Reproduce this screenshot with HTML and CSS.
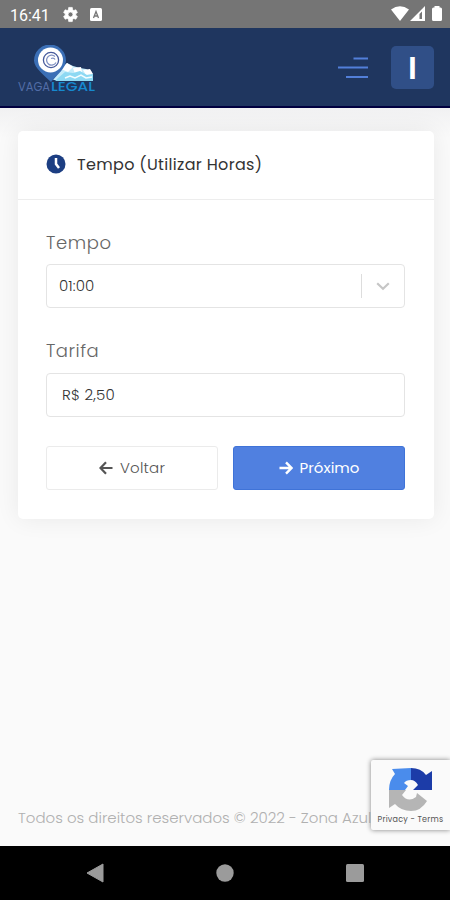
FILE: index.html
```html
<!DOCTYPE html>
<html lang="pt-BR">
<head>
    <meta charset="UTF-8">
    <meta name="viewport" content="width=device-width, initial-scale=1.0">
    <title>Vaga Legal - Tempo</title>
    <link rel="stylesheet" href="styles.css">
</head>
<body>
    <div class="status-bar">
        <span class="clock">16:41</span>
        <svg class="status-gear" width="17" height="17" viewBox="0 0 24 24"><path fill="#fff" stroke="#fff" fill-rule="evenodd" d="M19.4 13c.1-.7.1-1.300 0-2l2.300-1.800-2.200-3.900-2.800 1.100-1.700-1L14.500 2h-5L9 5.400l-1.700 1-2.800-1.100-2.200 3.900L4.600 11v2l-2.300 1.800 2.200 3.900 2.800-1.100 1.700 1 .5 3.400h5l.5-3.400 1.700-1 2.800 1.100 2.200-3.900zM12 15.500a3.500 3.500 0 1 1 0-7 3.500 3.500 0 0 1 0 7z"/></svg>
        <svg class="status-app" width="12" height="13" viewBox="0 0 12 13"><rect width="12" height="13" rx="1.500" fill="#fff"/><path d="M3.500 10 6 3.500 8.500 10M4.500 8h3" fill="none" stroke="#777" stroke-width="1.300"/></svg>
        <svg class="status-signal" width="52" height="18" viewBox="0 0 52 18"><path fill="#fff" d="M0 4.500Q9-2 18 4.500L9 16zM19 16 34 1v15z"/><path d="M28.500 14V9L31 6.500V14z" fill="#757575"/><path fill="#fff" d="M43.500 1h5v1.500h1q1.500 0 1.500 1.500v10.500q0 1.500-1.500 1.500h-7q-1.500 0-1.500-1.500V4q0-1.500 1.500-1.500h1z"/></svg>
    </div>

    <header class="topbar">
        <svg class="logo" width="80" height="52" viewBox="0 0 80 52">
            <path d="M36 35 44 24l6-6 6 3 7 2 6 1 6 3 1 9z" fill="#c5ecfa"/>
            <path d="m44 24 6-6 6 4-5 5zM56 23l8-1 1 5-7 2zM66 25l7-1 3 5-7 1z" fill="#fff"/>
            <path d="m41 33 7-6 8 1 7-2 7 4 6-1v7H38z" fill="#8ed9f3"/>
            <path d="m48 33 5-2 5 2 6-3 5 3 6-1" fill="none" stroke="#f4fdff" stroke-width="1.500"/>
            <path d="M34 37C28 31 17 23 17 15.500a16 16 0 0 1 32 0C49 23 40 30 34 37z" fill="#3b6fb6"/>
            <circle cx="33.500" cy="15" r="12.500" fill="#fff"/>
            <circle cx="34" cy="15" r="7.600" fill="none" stroke="#465a9c" stroke-width="1.300"/>
            <path d="M38 11.500a5 5 0 1 0 1 6M34 13.500q3-1 4 1" fill="none" stroke="#8293c4" stroke-width="1.300"/>
            <text class="logo-vaga" x="1" y="46" textLength="32" lengthAdjust="spacingAndGlyphs">VAGA</text>
            <text class="logo-legal" x="34" y="46" textLength="44" lengthAdjust="spacingAndGlyphs">LEGAL</text>
        </svg>
        <svg class="menu-icon" width="30" height="22" viewBox="0 0 30 22"><path d="M15.500 1.500H30M0 10.500h30M8 20h22" fill="none" stroke="#527fd9" stroke-width="2"/></svg>
        <div class="avatar">I</div>
    </header>

    <main class="page">
        <section class="card">
            <div class="card-header">
                <svg width="20" height="20" viewBox="0 0 20 20"><circle cx="10" cy="10" r="9.500" fill="#1c3e82"/><path d="M10 4v6l3 4" fill="none" stroke="#fff" stroke-width="2.500"/></svg>
                <h1 class="card-title">Tempo (Utilizar Horas)</h1>
            </div>
            <form class="card-body">
                <div class="form-group">
                    <label class="label-tempo">Tempo</label>
                    <div class="field select">
                        <span class="select-value">01:00</span>
                        <span class="separator"></span>
                        <svg class="chevron" width="14" height="9" viewBox="0 0 14 9"><path d="m1.200 1.300 5.800 5.400 5.800-5.400" fill="none" stroke="#c6c6c6" stroke-width="2.200"/></svg>
                    </div>
                </div>
                <div class="form-group">
                    <label class="label-tarifa">Tarifa</label>
                    <div class="field price"><span class="price-value">R$ 2,50</span></div>
                </div>
                <div class="buttons">
                    <button type="button" class="btn btn-back">
                        <svg width="14" height="14" viewBox="0 0 14 14"><path d="M13.500 7H2M7 1.300 1.500 7 7 12.700" fill="none" stroke="currentColor" stroke-width="2.200"/></svg>
                        <span>Voltar</span>
                    </button>
                    <button type="button" class="btn btn-next">
                        <svg width="14" height="14" viewBox="0 0 14 14"><path d="M.5 7H12M7 1.300 12.500 7 7 12.700" fill="none" stroke="currentColor" stroke-width="2.400"/></svg>
                        <span>Próximo</span>
                    </button>
                </div>
            </form>
        </section>
        <footer class="footer">Todos os direitos reservados © 2022 - Zona Azul</footer>
    </main>

    <div class="recaptcha">
        <svg width="43" height="43" viewBox="0 0 43 43">
            <path d="M22 0v12q-5 0-7 3l4 3-3 4H0Q0 12 6 6L3 1z" fill="#4a8cec"/>
            <path d="M22 0q10 0 15 7l6-4v19H24l5-5q-3-5-7-5z" fill="#1c3ca8"/>
            <path d="M0 22h17l-4 5q6 8 14 2l1-4 10 8Q32 43 22 43 12 43 6 36l-6 4z" fill="#b5b5b5"/>
        </svg>
        <span class="recaptcha-text">Privacy - Terms</span>
    </div>

    <nav class="nav-bar">
        <svg width="18" height="20" viewBox="0 0 18 20"><path d="M17 1v18L1 10z" fill="#9b9b9b" stroke="#9b9b9b" stroke-linejoin="round"/></svg>
        <svg width="18" height="18" viewBox="0 0 18 18"><circle cx="9" cy="9" r="8.700" fill="#9b9b9b"/></svg>
        <svg width="18" height="18" viewBox="0 0 18 18"><rect width="18" height="18" rx="1.500" fill="#9b9b9b"/></svg>
    </nav>
</body>
</html>
```
FILE: styles.css
```css
* { box-sizing: border-box; }
body { margin: 0; height: 900px; display: flex; flex-direction: column; overflow: hidden; background: #fafafa; font-family: Poppins, Inter, sans-serif; font-weight: 300; }
svg { display: block; flex-shrink: 0; }

.status-bar { height: 28px; flex-shrink: 0; display: flex; align-items: center; background: #757575; padding: 0 7px 0 10px; }
.clock { width: 52px; color: #fff; font: 400 16px Roboto, sans-serif; padding-top: 2px; }
.status-app { margin-left: 11px; }
.status-signal { margin-left: auto; }

.topbar { height: 80px; flex-shrink: 0; display: flex; align-items: center; padding: 0 16px 0 18px; background: #1f365f; border-bottom: 2px solid #00003f; }
.logo { margin: 8px 0 0 -1px; }
.logo-vaga, .logo-legal { font-family: Poppins, Inter, sans-serif; font-size: 11.5px; }
.logo-vaga { fill: #526da7; font-weight: 400; }
.logo-legal { fill: #1689cf; font-weight: 500; }
.menu-icon { margin: 2px 23px 0 auto; }
.avatar { width: 43px; height: 43px; display: flex; align-items: center; justify-content: center; margin-top: 1px; border-radius: 5px; background: #304f87; color: #fff; font: 700 30px Inter, sans-serif; }

.page { flex: 1; display: flex; flex-direction: column; padding: 23px 16px 0 18px; background: linear-gradient(#f1f1f2, #fafafa 30px); }
.card { height: 388px; background: #fff; border-radius: 5px; box-shadow: 0 0 24px rgba(0, 0, 0, 0.07); }
.card-header { height: 69px; display: flex; align-items: center; gap: 11px; padding: 0 28px 2px; border-bottom: 1px solid #ededed; }
.card-title { margin: 0; color: #333; font-size: 16px; font-weight: 400; letter-spacing: 0.33px; }
.card-body { padding: 30px 29px 0 28px; }
.form-group { margin-bottom: 30px; }
label { display: block; height: 34px; line-height: 26px; color: #666; font-size: 18px; }
.label-tempo { letter-spacing: 0.6px; }
.label-tarifa { letter-spacing: 0.5px; }
.form-group + .form-group label { height: 35px; }
.form-group + .form-group { margin-bottom: 29px; }
.field { height: 44px; display: flex; align-items: center; border: 1px solid #e4e4e4; border-radius: 4px; color: #333; font-size: 15px; }
.select { padding: 0 14px 0 12px; }
.select-value { letter-spacing: 0.1px; margin-bottom: 1px; }
.separator { width: 1px; height: 24px; margin-left: auto; margin-right: 14px; background: #ddd; }
.price { padding-left: 15px; }
.price-value { letter-spacing: 0.2px; margin-bottom: 1px; }

.buttons { display: flex; gap: 15px; }
.btn { flex: 1; height: 44px; display: flex; align-items: center; justify-content: center; gap: 7px; padding: 0; border: 1px solid #ebebeb; border-radius: 3px; background: #fff; color: #555; font-family: inherit; font-size: 15px; font-weight: 300; letter-spacing: 0.2px; }
.btn span { margin-bottom: 1px; }
.btn-next { background: #5080e0; border-color: #3f73d8; color: #fff; font-weight: 400; letter-spacing: 0; }

.footer { margin-top: auto; height: 40px; line-height: 24px; color: #b0b0b0; font-size: 15px; white-space: nowrap; }

/* badge floats over the footer */
.recaptcha { position: absolute; right: 0; top: 760px; width: 79px; height: 70px; padding-top: 8px; display: flex; flex-direction: column; align-items: center; gap: 3px; background: #fafafa; border-radius: 2px 0 0 2px; box-shadow: 0 0 5px #808080; }
.recaptcha-text { color: #555; font-size: 8px; line-height: 12px; font-weight: 400; white-space: nowrap; letter-spacing: 0.25px; }

.nav-bar { height: 54px; flex-shrink: 0; display: flex; align-items: center; justify-content: space-between; padding: 0 86px; background: #000; }
```
